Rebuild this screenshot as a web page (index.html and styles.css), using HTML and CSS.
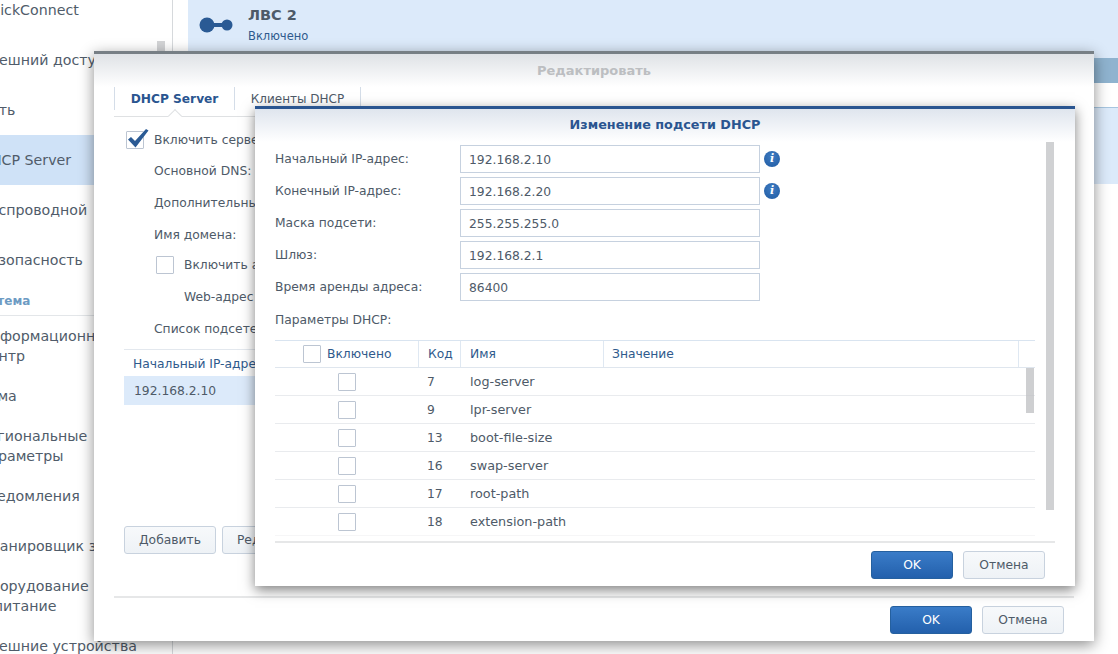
FILE: index.html
```html
<!DOCTYPE html>
<html lang="ru">
<head>
<meta charset="utf-8">
<title>DHCP Server</title>
<link rel="stylesheet" href="styles.css">
</head>
<body>
<div class="app">
  <nav class="sidebar">
    <ul class="nav">
      <li>QuickConnect</li>
      <li>Внешний доступ</li>
      <li>Сеть</li>
      <li class="active">DHCP Server</li>
      <li>Беспроводной</li>
      <li>Безопасность</li>
      <li class="section">Система</li>
      <li class="two">Информационный<br>центр</li>
      <li>Тема</li>
      <li class="two">Региональные<br>параметры</li>
      <li>Уведомления</li>
      <li>Планировщик задач</li>
      <li class="two">Оборудование<br>и питание</li>
      <li>Внешние устройства</li>
    </ul>
    <div class="side-scroll"></div>
  </nav>
  <main class="main">
    <section class="lan">
      <svg class="lan-icon" width="40" height="20" viewBox="0 0 40 20"><circle cx="9" cy="10" r="7.5" fill="#2a5a94"/><circle cx="29" cy="10" r="5.5" fill="#2a5a94"/><rect x="9" y="8" width="20" height="4" fill="#2a5a94"/></svg>
      <div>
        <div class="lan-name">ЛВС 2</div>
        <div class="lan-state">Включено</div>
      </div>
    </section>
    <div class="strip"></div>
    <div class="blank"></div>
    <div class="row-blue"></div>
  </main>
</div>

<div class="window outer">
  <header class="win-head">Редактировать</header>
  <div class="tabs">
    <div class="tab tab-on">DHCP Server</div>
    <div class="tab tab-off">Клиенты DHCP</div>
  </div>
  <div class="outer-body">
    <div class="frow first"><span class="box checked"><svg width="24" height="22" viewBox="0 0 24 22"><path d="M2 11.500 L5 9 L9 13 L20 1 L22.500 2.500 L9.500 19.500 Z" fill="#2a5a94"/></svg></span><span>Включить сервер DHCP</span></div>
    <div class="frow ind">Основной DNS:</div>
    <div class="frow ind">Дополнительный DNS:</div>
    <div class="frow ind">Имя домена:</div>
    <div class="frow sub"><span class="box"></span><span>Включить автоматическую настройку</span></div>
    <div class="frow ind2">Web-адрес</div>
    <div class="frow ind">Список подсетей:</div>
    <div class="sub-table">
      <div class="sub-head">Начальный IP-адрес</div>
      <div class="sub-row">192.168.2.10</div>
    </div>
    <div class="left-btns">
      <button class="btn wide">Добавить</button>
      <button class="btn wide">Редактировать</button>
    </div>
  </div>
  <footer class="win-foot outer-foot">
    <button class="btn primary">OK</button>
    <button class="btn">Отмена</button>
  </footer>
</div>

<div class="window inner">
  <header class="win-head inner-head">Изменение подсети DHCP</header>
  <div class="inner-body">
    <div class="field"><label>Начальный IP-адрес:</label><div class="input">192.168.2.10</div><span class="info">i</span></div>
    <div class="field"><label>Конечный IP-адрес:</label><div class="input">192.168.2.20</div><span class="info">i</span></div>
    <div class="field"><label>Маска подсети:</label><div class="input">255.255.255.0</div></div>
    <div class="field"><label>Шлюз:</label><div class="input">192.168.2.1</div></div>
    <div class="field"><label>Время аренды адреса:</label><div class="input">86400</div></div>
    <div class="params">Параметры DHCP:</div>
    <div class="grid">
      <div class="g-row g-head">
        <div class="c-on"><span class="box"></span><span>Включено</span></div>
        <div class="c-code">Код</div>
        <div class="c-name">Имя</div>
        <div class="c-val">Значение</div>
        <div class="c-end"></div>
      </div>
      <div class="g-row"><div class="c-on"><span class="box"></span></div><div class="c-code">7</div><div class="c-name">log-server</div><div class="c-val"></div><div class="c-end"></div></div>
      <div class="g-row"><div class="c-on"><span class="box"></span></div><div class="c-code">9</div><div class="c-name">lpr-server</div><div class="c-val"></div><div class="c-end"></div></div>
      <div class="g-row"><div class="c-on"><span class="box"></span></div><div class="c-code">13</div><div class="c-name">boot-file-size</div><div class="c-val"></div><div class="c-end"></div></div>
      <div class="g-row"><div class="c-on"><span class="box"></span></div><div class="c-code">16</div><div class="c-name">swap-server</div><div class="c-val"></div><div class="c-end"></div></div>
      <div class="g-row"><div class="c-on"><span class="box"></span></div><div class="c-code">17</div><div class="c-name">root-path</div><div class="c-val"></div><div class="c-end"></div></div>
      <div class="g-row g-last"><div class="c-on"><span class="box"></span></div><div class="c-code">18</div><div class="c-name">extension-path</div><div class="c-val"></div><div class="c-end"></div></div>
      <div class="grid-scroll"></div>
    </div>
    <div class="form-scroll"></div>
  </div>
  <footer class="win-foot inner-foot">
    <button class="btn primary">OK</button>
    <button class="btn">Отмена</button>
  </footer>
</div>
</body>
</html>
```

FILE: styles.css
```css
* { box-sizing: border-box; }
html, body { margin: 0; height: 100%; }
body {
  position: relative;
  width: 1118px;
  height: 654px;
  overflow: hidden;
  background: #fff;
  font-family: "DejaVu Sans", "Liberation Sans", sans-serif;
  font-size: 12.300px;
  color: #4e5a68;
}
.app { display: flex; height: 654px; }

.sidebar {
  position: relative;
  width: 173px;
  flex: none;
  border-right: 1px solid #d6d9dc;
  overflow: hidden;
}
.nav {
  list-style: none;
  margin: -15px 0 0 -20px;
  padding: 0;
  font-size: 14.200px;
  color: #505c6a;
}
.nav li {
  height: 50px;
  line-height: 50px;
  padding-left: 0;
  white-space: nowrap;
}
.nav .two { line-height: 20px; padding-top: 5px; }
.nav .active { background: #cfe2f7; }
.nav .section {
  height: 31px;
  line-height: 33px;
  margin-bottom: 5px;
  text-indent: -7px;
  font-size: 12px;
  font-weight: 700;
  color: #6d9bc3;
  border-bottom: 1px solid #e3e6e9;
}
.side-scroll {
  position: absolute;
  left: 157px;
  top: 41px;
  width: 8px;
  height: 60px;
  background: #d3d4d6;
}

.main { flex: 1; display: flex; flex-direction: column; padding-left: 15px; }
.lan {
  height: 58px;
  background: #dceafa;
  display: flex;
  align-items: flex-start;
  padding-left: 10px;
  gap: 10px;
}
.lan-icon { margin-top: 15px; }
.lan-name { font-size: 14.500px; font-weight: 700; color: #4d5a68; margin-top: 6px; line-height: 18px; }
.lan-state { font-size: 11.500px; color: #2f5a8c; margin-top: 4px; line-height: 16px; }
.strip { height: 25px; background: #8fb3cf; }
.blank { height: 25px; border-bottom: 1px solid #a7c6e0; background: #fff; }
.row-blue { height: 76px; background: #dceafa; }

.window {
  position: absolute;
  display: flex;
  flex-direction: column;
  background: #fff;
}
.outer {
  left: 94px;
  top: 51px;
  width: 1000px;
  height: 590px;
  border-top: 3px solid #777f85;
  box-shadow: 0 4px 14px rgba(0, 0, 0, .45);
}
.inner {
  left: 255px;
  top: 106px;
  width: 820px;
  height: 480px;
  border-top: 3px solid #2a5590;
  box-shadow: 0 4px 12px rgba(0, 0, 0, .5);
}
.win-head {
  flex: none;
  height: 33px;
  line-height: 33px;
  text-align: center;
  font-size: 13px;
  font-weight: 700;
  color: #bcbec1;
  background: linear-gradient(#dfe2e6, #fff);
}
.inner-head {
  color: #2a5590;
  font-size: 12.800px;
  line-height: 32px;
  background: linear-gradient(#dfe5ee, #fff);
}

.tabs {
  flex: none;
  display: flex;
  position: relative;
  height: 30px;
  margin: 0 20px;
  border-bottom: 1px solid #dfe1e3;
}
.tab {
  height: 23px;
  line-height: 25px;
  text-align: center;
  border-left: 1px solid #d4dde8;
}
.tab-on { width: 120px; font-weight: 700; font-size: 12.200px; color: #2a5590; position: relative; }
.tab-on::after {
  content: "";
  position: absolute;
  left: 55px;
  top: 24px;
  width: 9px;
  height: 9px;
  background: #fff;
  border-top: 1px solid #dfe1e3;
  border-left: 1px solid #dfe1e3;
  transform: rotate(45deg);
}
.tab-off { width: 127px; border-right: 1px solid #d4dde8; color: #4e5a68; font-size: 12px; }

.outer-body {
  flex: 1;
  display: flex;
  flex-direction: column;
  padding: 6px 0 42px 30px;
  min-height: 0;
}
.frow { display: flex; align-items: center; height: 32px; white-space: nowrap; flex: none; }
.first { padding: 2px 0 0 2px; gap: 10px; }
.ind { padding-left: 30px; }
.ind2 { padding-left: 60px; }
.sub { padding-left: 32px; gap: 10px; height: 28px; margin-bottom: 2px; }
.box {
  position: relative;
  display: inline-block;
  flex: none;
  width: 18px;
  height: 18px;
  background: #fff;
  border: 1px solid #bcc5d2;
  border-radius: 1px;
}
.checked svg { position: absolute; left: -1px; top: -4px; }
.sub-table { margin-top: 4px; border-top: 1px solid #e3e8ee; width: 400px; flex: none; }
.sub-head { height: 26px; line-height: 28px; padding-left: 9px; color: #2f5a8c; white-space: nowrap; }
.sub-row { height: 29px; line-height: 31px; padding-left: 10px; background: #dceafa; }
.left-btns { margin-top: auto; display: flex; gap: 6px; }

.btn {
  display: block;
  width: 82px;
  height: 28px;
  padding: 0;
  font: inherit;
  color: #4e5a68;
  background: linear-gradient(#f7f9fb, #eef2f6);
  border: 1px solid #c8d2de;
  border-radius: 3px;
}
.btn.wide { width: auto; padding: 0 14px; }
.btn.primary {
  color: #fff;
  background: linear-gradient(#3a7cc8, #2360ac);
  border-color: #25609f;
}
.win-foot {
  flex: none;
  display: flex;
  justify-content: flex-end;
  gap: 10px;
  margin: 0 20px;
  padding: 8px 10px 0 0;
  border-top: 2px solid #e6e7e8;
}
.outer-foot { height: 45px; }
.inner-foot { height: 45px; }

.inner-body {
  position: relative;
  flex: 1;
  min-height: 0;
  padding: 3px 0 0 20px;
  overflow: hidden;
}
.field { display: flex; align-items: center; height: 28px; margin-bottom: 4px; }
.field label { width: 185px; flex: none; }
.input {
  width: 300px;
  height: 28px;
  line-height: 29px;
  padding-left: 8px;
  border: 1px solid #c6d1df;
}
.info {
  width: 16px;
  height: 16px;
  margin-left: 4px;
  border-radius: 50%;
  background: radial-gradient(circle at 50% 35%, #3f7cc2, #1f5aa2);
  color: #fff;
  font-family: "DejaVu Serif", serif;
  font-size: 11px;
  font-weight: 700;
  font-style: italic;
  line-height: 16px;
  text-align: center;
}
.params { height: 32px; line-height: 30px; margin-bottom: 3px; }
.grid { position: relative; width: 760px; }
.g-row {
  display: grid;
  grid-template-columns: 143px 42px 143px 415px 17px;
  height: 28px;
  align-items: center;
  border-bottom: 1px solid #e9ebee;
}
.g-row > div { height: 100%; display: flex; align-items: center; }
.g-head { color: #2f5a8c; border-top: 1px solid #d9e4f0; border-bottom-color: #dfe6ee; }
.g-head > div + div { border-left: 1px solid #dfe8f2; }
.g-last { border-bottom-color: #f6f6f7; }
.c-on { justify-content: center; }
.g-head .c-on { justify-content: flex-start; padding-left: 28px; gap: 6px; }
.c-code { padding-left: 9px; }
.c-name { padding-left: 9px; }
.g-row:not(.g-head) .c-name { padding-left: 10px; font-size: 12.800px; }
.c-val { padding-left: 8px; }
.form-scroll {
  position: absolute;
  left: 791px;
  top: 0;
  width: 8px;
  height: 368px;
  background: #d0d1d3;
}
.grid-scroll {
  position: absolute;
  left: 751px;
  top: 28px;
  width: 8px;
  height: 45px;
  background: rgba(190, 191, 194, .75);
}
```
